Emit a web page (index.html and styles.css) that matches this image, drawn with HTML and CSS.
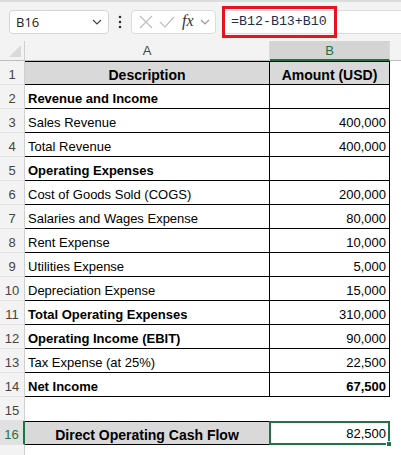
FILE: index.html
```html
<!DOCTYPE html>
<html>
<head>
<meta charset="utf-8">
<link rel="stylesheet" href="styles.css">
</head>
<body>
<div class="toolbar">
  <div class="namebox">
    <span class="nametext">B16</span>
    <svg class="chev" width="10" height="6" viewBox="0 0 10 6"><path d="M1 1 L5 5 L9 1" fill="none" stroke="#444" stroke-width="1.2"/></svg>
  </div>
  <div class="dots">
    <svg width="4" height="14" viewBox="0 0 4 14"><circle cx="2" cy="2" r="1.3" fill="#333"/><circle cx="2" cy="7" r="1.3" fill="#333"/><circle cx="2" cy="12" r="1.3" fill="#333"/></svg>
  </div>
  <div class="fxbox">
    <svg width="14" height="14" viewBox="0 0 14 14"><path d="M1 1 L13 13 M13 1 L1 13" stroke="#bdbdbd" stroke-width="1.2" fill="none"/></svg>
    <svg width="16" height="14" viewBox="0 0 16 14"><path d="M1 7 L6 12 L15 2" stroke="#bdbdbd" stroke-width="1.2" fill="none"/></svg>
    <span class="fx">fx</span>
    <svg width="10" height="6" viewBox="0 0 10 6"><path d="M1 1 L5 5 L9 1" fill="none" stroke="#999" stroke-width="1.2"/></svg>
  </div>
  <div class="formula">
    <span class="ftext">=B12-B13+B10</span>
    <span class="hl"></span>
  </div>
</div>
<div class="sheet">
  <div class="row head">
    <div class="rh corner"><span class="tri"></span></div>
    <div class="ch a">A</div>
    <div class="ch b sel">B</div>
    <div class="ch rest"></div>
  </div>
  <div class="row"><div class="rh">1</div><div class="c a bd fill bold center top">Description</div><div class="c b bd fill bold center top">Amount (USD)</div></div>
  <div class="row"><div class="rh">2</div><div class="c a bd bold">Revenue and Income</div><div class="c b bd"></div></div>
  <div class="row"><div class="rh">3</div><div class="c a bd">Sales Revenue</div><div class="c b bd num">400,000</div></div>
  <div class="row"><div class="rh">4</div><div class="c a bd">Total Revenue</div><div class="c b bd num">400,000</div></div>
  <div class="row"><div class="rh">5</div><div class="c a bd bold">Operating Expenses</div><div class="c b bd"></div></div>
  <div class="row"><div class="rh">6</div><div class="c a bd">Cost of Goods Sold (COGS)</div><div class="c b bd num">200,000</div></div>
  <div class="row"><div class="rh">7</div><div class="c a bd">Salaries and Wages Expense</div><div class="c b bd num">80,000</div></div>
  <div class="row"><div class="rh">8</div><div class="c a bd">Rent Expense</div><div class="c b bd num">10,000</div></div>
  <div class="row"><div class="rh">9</div><div class="c a bd">Utilities Expense</div><div class="c b bd num">5,000</div></div>
  <div class="row"><div class="rh">10</div><div class="c a bd">Depreciation Expense</div><div class="c b bd num">15,000</div></div>
  <div class="row"><div class="rh">11</div><div class="c a bd bold">Total Operating Expenses</div><div class="c b bd num">310,000</div></div>
  <div class="row"><div class="rh">12</div><div class="c a bd bold">Operating Income (EBIT)</div><div class="c b bd num">90,000</div></div>
  <div class="row"><div class="rh">13</div><div class="c a bd">Tax Expense (at 25%)</div><div class="c b bd num">22,500</div></div>
  <div class="row"><div class="rh">14</div><div class="c a bd bold">Net Income</div><div class="c b bd num bold">67,500</div></div>
  <div class="row"><div class="rh">15</div><div class="c a"></div><div class="c b"></div></div>
  <div class="row"><div class="rh active">16</div><div class="c a bd fill bold center top">Direct Operating Cash Flow</div><div class="c b num selcell">82,500<span class="handle"></span></div></div>
  <div class="row"><div class="rh"></div><div class="c a"></div><div class="c b"></div></div>
</div>
</body>
</html>
```

FILE: styles.css
```css
* { box-sizing: border-box; }
html, body { margin: 0; padding: 0; }
body {
  width: 401px;
  height: 455px;
  overflow: hidden;
  background: #ffffff;
  font-family: "Liberation Sans", Arial, sans-serif;
  color: #000;
}
.toolbar {
  height: 41px;
  background: #f3f3f3;
  border-top: 2px solid #dcdcdc;
  display: flex;
  align-items: center;
  padding-left: 9px;
  position: relative;
}
.namebox {
  width: 100px;
  height: 24px;
  background: #fff;
  border: 1px solid #d6d6d6;
  border-radius: 4px;
  display: flex;
  align-items: center;
  justify-content: space-between;
  padding: 0 6px 0 6px;
}
.nametext {
  font-family: "Open Sans", sans-serif;
  font-size: 13px;
  color: #222;
}
.dots {
  width: 22px;
  display: flex;
  justify-content: center;
  align-items: center;
}
.fxbox {
  width: 85px;
  height: 24px;
  background: #fff;
  border: 1px solid #dcdcdc;
  border-radius: 4px;
  display: flex;
  align-items: center;
  justify-content: space-between;
  padding: 0 5px 0 7px;
}
.fx {
  font-family: "Liberation Serif", serif;
  font-style: italic;
  font-size: 16px;
  color: #333;
  margin-top: -2px;
}
.formula {
  flex: 1;
  height: 24px;
  margin-left: 6px;
  background: #fff;
  border: 1px solid #dcdcdc;
  border-right: none;
  border-radius: 4px 0 0 4px;
  display: flex;
  align-items: center;
  padding-left: 8px;
  position: relative;
}
.ftext {
  font-family: "Liberation Mono", monospace;
  font-size: 13.3px;
  color: #1f2f4a;
}
.hl {
  position: absolute;
  left: -1px;
  top: -5px;
  width: 115px;
  height: 32px;
  border: 3px solid #e8141b;
}
.sheet {
  display: flex;
  flex-direction: column;
}
.row {
  display: flex;
  height: 24px;
}
.row.head {
  height: 20px;
}
.rh {
  width: 25px;
  flex: none;
  background: #f3f3f3;
  border-right: 1px solid #cfcfcf;
  border-bottom: 1px solid #e2e2e2;
  color: #444;
  font-size: 13px;
  display: flex;
  align-items: flex-end;
  justify-content: center;
  line-height: 16px;
  padding-bottom: 1px;
}
.rh.active {
  color: #217346;
  background: #e1e1e1;
  border-right: 2px solid #217346;
}
.corner {
  position: relative;
  border-bottom: 1px solid #bdbdbd;
}
.tri {
  position: absolute;
  right: 3px;
  bottom: 3px;
  width: 0;
  height: 0;
  border-left: 12px solid transparent;
  border-bottom: 12px solid #dadada;
}
.ch {
  background: #f3f3f3;
  border-right: 1px solid #dadada;
  border-bottom: 1px solid #bdbdbd;
  color: #444;
  font-size: 13px;
  display: flex;
  align-items: center;
  justify-content: center;
}
.ch.a, .c.a { width: 245px; flex: none; }
.ch.b, .c.b { width: 120px; flex: none; }
.ch.rest { flex: 1; border-right: none; }
.ch.sel {
  background: #d4d4d4;
  color: #217346;
  border-bottom: 2px solid #217346;
}
.c {
  font-size: 13px;
  line-height: 16px;
  display: flex;
  align-items: flex-end;
  padding: 0 3px 1px 3px;
  white-space: nowrap;
}
.c.bd {
  border-right: 1px solid #000;
  border-bottom: 1px solid #000;
}
.c.top { border-top: 1px solid #000; }
.c.fill { background: #d9d9d9; }
.bold { font-weight: bold; }
.center { justify-content: center; font-size: 14px; }
.num { justify-content: flex-end; }
.selcell {
  position: relative;
  border: 2px solid #217346;
  margin-left: -1px;
  width: 121px !important;
  padding-right: 2px;
}
.handle {
  position: absolute;
  right: -4px;
  bottom: -4px;
  width: 6px;
  height: 6px;
  background: #217346;
  border: 1px solid #fff;
}
```
